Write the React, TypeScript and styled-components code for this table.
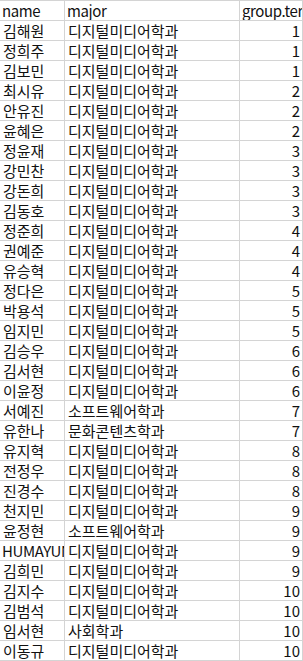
import React from 'react'
import { styled, createGlobalStyle } from 'styled-components'

const GlobalStyle = createGlobalStyle`
    html, body {
        margin: 0;
        padding: 0;
        background: #ffffff;
    }
`

const Sheet = styled.div`
    display: grid;
    grid-template-columns: 65px 175px 63px;
    width: 303px;
    font-family: "Noto Sans CJK KR", "Noto Sans", sans-serif;
    font-size: 15px;
    color: #111;
`

const Cell = styled.div<{ $num?: boolean; $head?: boolean; $latin?: boolean }>`
    box-sizing: border-box;
    height: ${p => (p.$head ? '21px' : '20px')};
    border-right: 1px solid #d4d4d4;
    border-bottom: 1px solid #d4d4d4;
    border-top: ${p => (p.$head ? '1px solid #d4d4d4' : 'none')};
    padding: 0 ${p => (p.$num ? '2px' : '3px')} 0 ${p => (p.$latin ? '2px' : '3px')};
    line-height: 19px;
    letter-spacing: ${p => (p.$latin ? '-0.4px' : '0')};
    white-space: nowrap;
    overflow: hidden;
    text-align: ${p => (p.$num ? 'right' : 'left')};
`

const DM = '디지털미디어학과'

const rows: [string, string, number][] = [
    ['김해원', DM, 1],
    ['정희주', DM, 1],
    ['김보민', DM, 1],
    ['최시유', DM, 2],
    ['안유진', DM, 2],
    ['윤혜은', DM, 2],
    ['정윤재', DM, 3],
    ['강민찬', DM, 3],
    ['강돈희', DM, 3],
    ['김동호', DM, 3],
    ['정준희', DM, 4],
    ['권예준', DM, 4],
    ['유승혁', DM, 4],
    ['정다은', DM, 5],
    ['박용석', DM, 5],
    ['임지민', DM, 5],
    ['김승우', DM, 6],
    ['김서현', DM, 6],
    ['이윤정', DM, 6],
    ['서예진', '소프트웨어학과', 7],
    ['유한나', '문화콘텐츠학과', 7],
    ['유지혁', DM, 8],
    ['전정우', DM, 8],
    ['진경수', DM, 8],
    ['천지민', DM, 9],
    ['윤정현', '소프트웨어학과', 9],
    ['HUMAYUN', DM, 9],
    ['김희민', DM, 9],
    ['김지수', DM, 10],
    ['김범석', DM, 10],
    ['임서현', '사회학과', 10],
    ['이동규', DM, 10],
]

const isLatin = (s: string) => /^[A-Za-z]+$/.test(s)

const App: React.FC = () => {
    return (<>
        <GlobalStyle />
        <Sheet>
            <Cell $head $latin>name</Cell>
            <Cell $head $latin>major</Cell>
            <Cell $head $latin>group.term</Cell>
            {rows.map(([name, major, group], i) => (
                <React.Fragment key={i}>
                    <Cell $latin={isLatin(name)}>{name}</Cell>
                    <Cell>{major}</Cell>
                    <Cell $num>{group}</Cell>
                </React.Fragment>
            ))}
        </Sheet>
    </>
    )
}

export default App
